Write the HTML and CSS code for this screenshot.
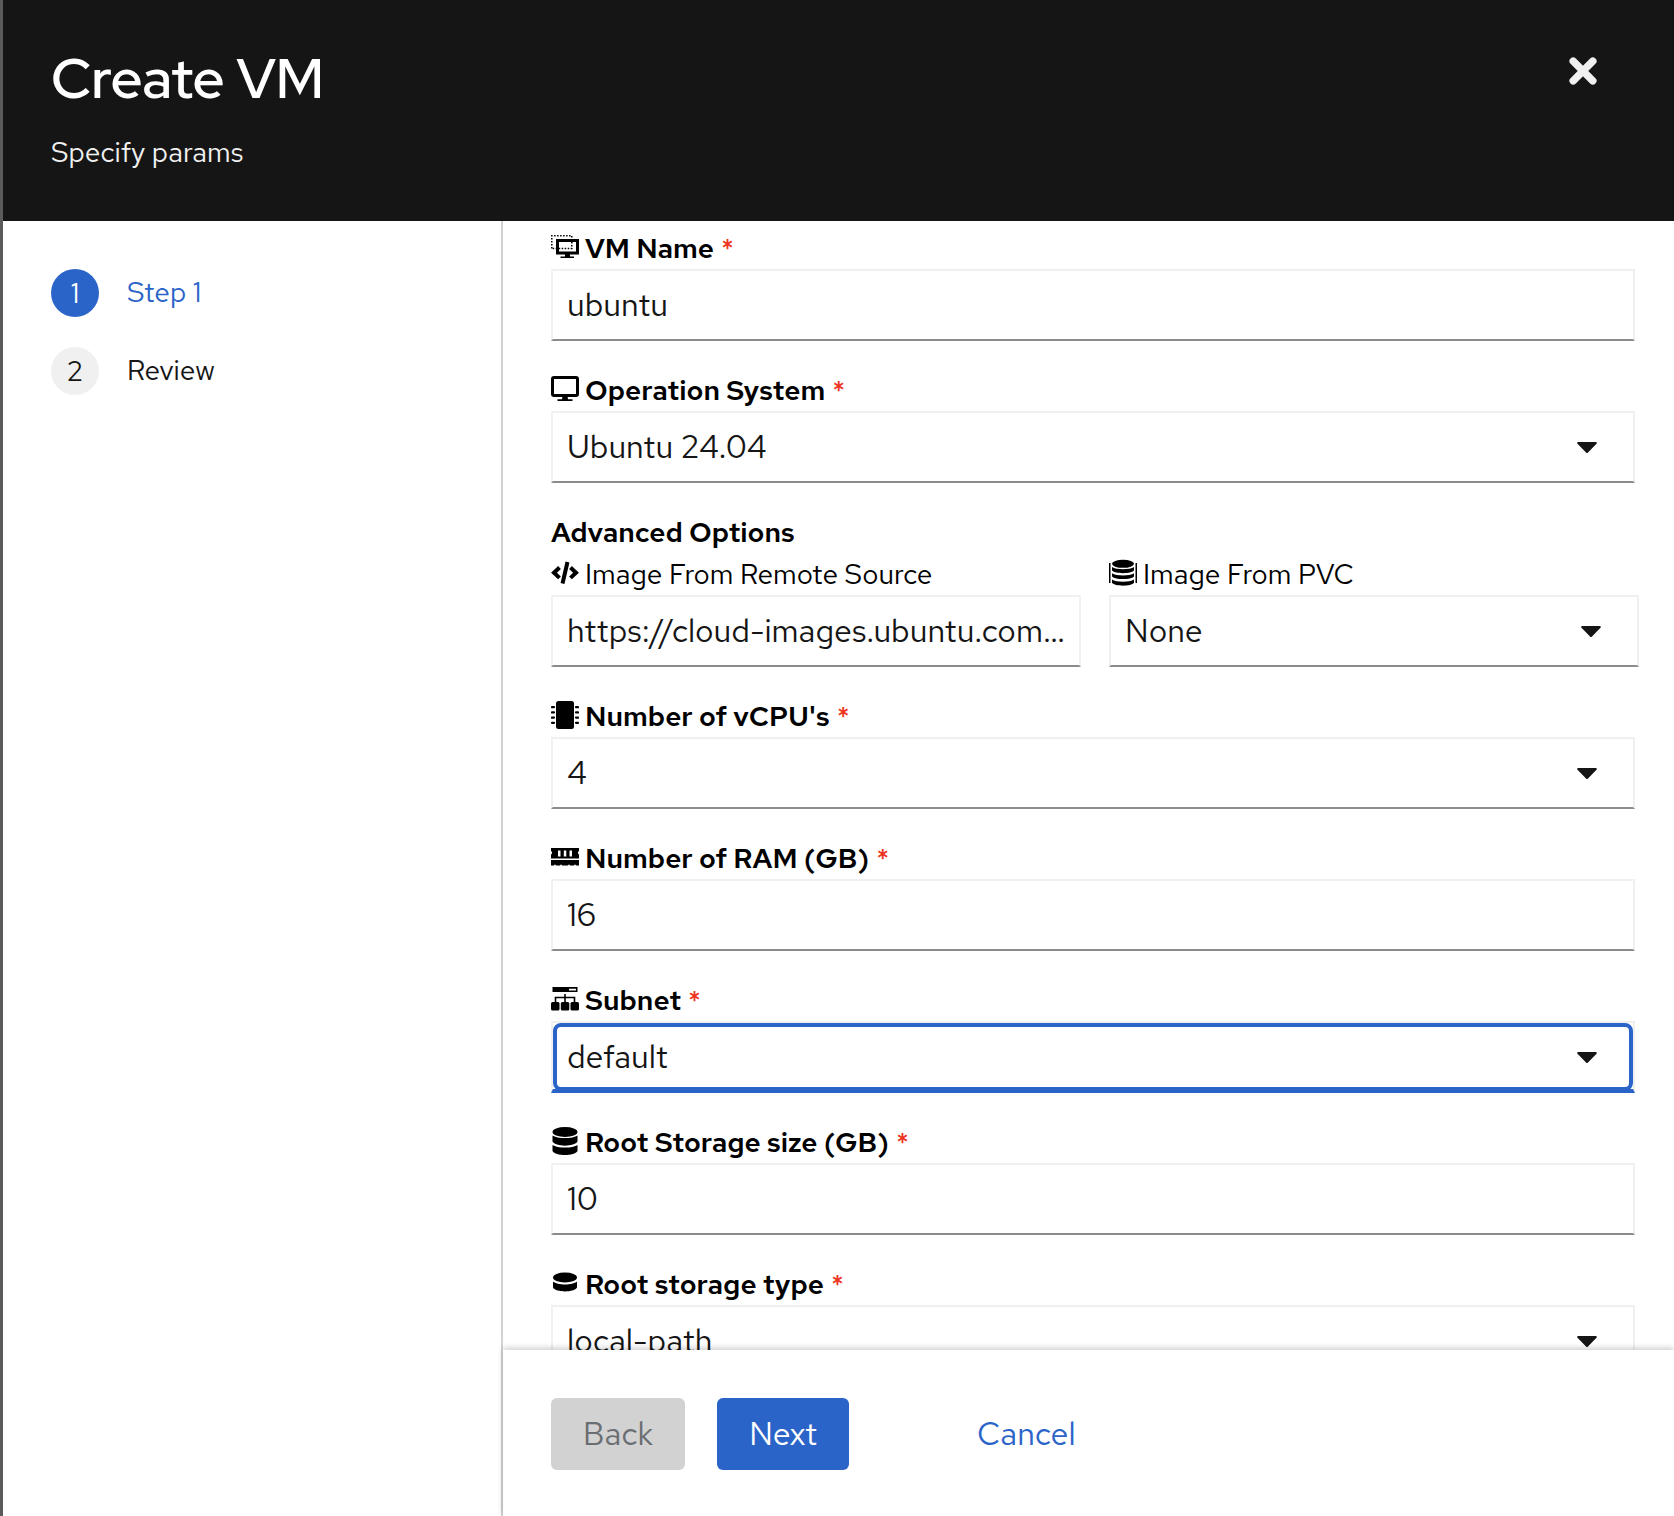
FILE: index.html
```html
<!DOCTYPE html>
<html lang="en">
<head>
<meta charset="utf-8">
<meta name="viewport" content="width=device-width, initial-scale=1">
<title>Create VM</title>
<link rel="stylesheet" href="styles.css">
</head>
<body>
<svg class="sprite" aria-hidden="true">
  <symbol id="caret" viewBox="0 0 20 11"><path d="M1.3 0h17.4c1 0 1.5 1.100.8 1.800L11 10.400a1.400 1.400 0 0 1-2 0L.5 1.800C-.2 1.100.3 0 1.300 0z"/></symbol>
</svg>
<div class="wizard">
  <header class="wizard-header">
    <div>
      <h1 class="wizard-title">Create VM</h1>
      <p class="wizard-description">Specify params</p>
    </div>
    <button class="close" type="button" aria-label="Close">
      <svg width="28" height="28" viewBox="0 0 28 28" fill="none" stroke="currentColor" stroke-width="7.500" stroke-linecap="round"><path d="M4.200 4.200l19.600 19.600M23.800 4.200L4.200 23.800"/></svg>
    </button>
  </header>

  <div class="wizard-body">
    <nav class="steps" aria-label="Steps">
      <ol class="steps-list">
        <li><button class="step step-current" type="button" aria-current="step"><span class="step-number">1</span><span class="step-name">Step 1</span></button></li>
        <li><button class="step" type="button"><span class="step-number">2</span><span class="step-name">Review</span></button></li>
      </ol>
    </nav>

    <main class="panel">
      <form class="form" id="vm-form">
        <div class="field">
          <label class="label" for="vm-name">
            <svg class="icon" viewBox="0 0 28 28"><path d="M.8 15.500V2.800h20V15.500H1" fill="none" stroke="#000" stroke-width="1.500" stroke-dasharray="1.500 1.500"/><path d="M6.500 7.500h20v12.500h-20z" fill="none" stroke="#000" stroke-width="3"/><path d="M14 21h5v2.500h4v1.500H9.500v-1.500H14z"/></svg>
            <span>VM Name</span><span class="required">*</span>
          </label>
          <input class="control" id="vm-name" type="text" value="ubuntu">
        </div>

        <div class="field">
          <label class="label" for="os">
            <svg class="icon" viewBox="0 0 28 28"><rect x="1.500" y="2.500" width="25" height="18" rx="1.500" fill="none" stroke="#000" stroke-width="3"/><path d="M11.500 21h5l.5 3.200h4.500V26h-15v-1.800H11z"/></svg>
            <span>Operation System</span><span class="required">*</span>
          </label>
          <div class="select">
            <select class="control" id="os"><option>Ubuntu 24.04</option></select>
            <svg class="caret"><use href="#caret"/></svg>
          </div>
        </div>

        <fieldset class="group">
          <legend class="label">Advanced Options</legend>
          <div class="columns">
            <div>
              <label class="label label-plain" for="remote">
                <svg class="icon" viewBox="0 0 28 28" fill="none" stroke="#000" stroke-width="4"><path d="M8.500 8.500L3 13.700l5.500 5.200M19.500 8.500l5.500 5.200-5.500 5.200M16.500 3l-5 21.500"/></svg>
                <span>Image From Remote Source</span>
              </label>
              <input class="control" id="remote" type="text" value="https://cloud-images.ubuntu.com/noble/current/noble-server-cloudimg-amd64.img">
            </div>
            <div>
              <label class="label label-plain" for="pvc">
                <svg class="icon" viewBox="0 0 28 28"><path d="M0 4h1.500v20H0zM26.500 4H28v20h-1.500z"/><ellipse cx="14" cy="4.800" rx="11" ry="4"/><path d="M3 8c4 3 18 3 22 0v3.500c-3 3.500-19 3.500-22 0zM3 14.200c4 3 18 3 22 0v3.200c-3 3.500-19 3.500-22 0zM3 20.500c4 3 18 3 22 0v3.300c-3 3.800-19 3.800-22 0z"/></svg>
                <span>Image From PVC</span>
              </label>
              <div class="select">
                <select class="control" id="pvc"><option>None</option></select>
                <svg class="caret"><use href="#caret"/></svg>
              </div>
            </div>
          </div>
        </fieldset>

        <div class="field">
          <label class="label" for="vcpu">
            <svg class="icon" viewBox="0 0 28 28"><rect x="5" y="0" width="18" height="28" rx="2.500"/><path d="M1 6.200h2M1 11.400h2M1 16.600h2M1 21.800h2M25 6.200h2M25 11.400h2M25 16.600h2M25 21.800h2" stroke="#000" stroke-width="2.200" stroke-linecap="round"/></svg>
            <span>Number of vCPU's</span><span class="required">*</span>
          </label>
          <div class="select">
            <select class="control" id="vcpu"><option>4</option></select>
            <svg class="caret"><use href="#caret"/></svg>
          </div>
        </div>

        <div class="field">
          <label class="label" for="ram">
            <svg class="icon" viewBox="0 0 28 28"><path fill-rule="evenodd" d="M0 5h28v3c-1.500.5-1.500 3 0 3.500V15.500H0v-4C1.500 11 1.500 8.500 0 8zM7 7.500v6h2.500v-6zM12.800 7.500v6h2.500v-6zM18.500 7.500v6H21v-6zM0 17h28v5.500h-3l-1-1.200-1 1.200h-4l-1-1.200-1 1.200h-6l-1-1.200-1 1.200H5l-1-1.200-1 1.200H0z"/></svg>
            <span>Number of RAM (GB)</span><span class="required">*</span>
          </label>
          <input class="control" id="ram" type="text" inputmode="numeric" value="16">
        </div>

        <div class="field">
          <label class="label" for="subnet">
            <svg class="icon" viewBox="0 0 28 28"><path fill-rule="evenodd" d="M1.500 2h25v5h-25zM18 3.700v1.800h7V3.700z"/><path d="M14 9v9M4.500 18v-5.500h19V18" fill="none" stroke="#000" stroke-width="1.600"/><rect x="0" y="17" width="8.500" height="8.500" rx="1.500"/><rect x="9.800" y="17" width="8.500" height="8.500" rx="1.500"/><rect x="19.500" y="17" width="8.500" height="8.500" rx="1.500"/></svg>
            <span>Subnet</span><span class="required">*</span>
          </label>
          <div class="select select-active">
            <select class="control" id="subnet"><option>default</option></select>
            <svg class="caret"><use href="#caret"/></svg>
          </div>
        </div>

        <div class="field">
          <label class="label" for="root-size">
            <svg class="icon" viewBox="0 0 28 28"><ellipse cx="14" cy="5" rx="12.500" ry="5"/><path d="M1.500 8.500c4.500 3.400 20.500 3.400 25 0v6c-3 5.500-22 5.500-25 0zM1.500 18c4.500 3.400 20.500 3.400 25 0v6c-3 5.300-22 5.300-25 0z"/></svg>
            <span>Root Storage size (GB)</span><span class="required">*</span>
          </label>
          <input class="control" id="root-size" type="text" inputmode="numeric" value="10">
        </div>

        <div class="field">
          <label class="label" for="root-type">
            <svg class="icon" viewBox="0 0 28 28"><ellipse cx="14" cy="8.500" rx="12" ry="5"/><path d="M2 12.500c4.500 4 19.500 4 24 0v6c-3 5.200-21 5.200-24 0z"/></svg>
            <span>Root storage type</span><span class="required">*</span>
          </label>
          <div class="select">
            <select class="control" id="root-type"><option>local-path</option></select>
            <svg class="caret"><use href="#caret"/></svg>
          </div>
        </div>
      </form>
    </main>

    <footer class="actions">
      <button class="button" type="button" disabled>Back</button>
      <button class="button button-primary" type="submit" form="vm-form">Next</button>
      <button class="button button-link" type="button">Cancel</button>
    </footer>
  </div>
</div>
</body>
</html>
```
FILE: styles.css
```css
* {
  box-sizing: border-box;
}

body {
  margin: 0;
  color: #151515;
  background: #fff;
  font-family: "Red Hat Text", Inter, sans-serif;
  font-size: 28px;
}

button,
input,
select {
  margin: 0;
  color: inherit;
  font: inherit;
}

button {
  border: 0;
  cursor: pointer;
}

.sprite {
  position: absolute;
  width: 0;
  height: 0;
}

.wizard {
  display: flex;
  flex-direction: column;
  height: 100vh;
  border-left: 3px solid #5a5a5a;
}

.wizard-header {
  display: flex;
  flex: none;
  justify-content: space-between;
  align-items: flex-start;
  padding: 42px 48px 48px;
  color: #fff;
  background: #151515;
}

.wizard-title {
  margin: 0;
  font-family: "Red Hat Display", "Red Hat Text", Inter, sans-serif;
  font-size: 56px;
  font-weight: 600;
  line-height: 72px;
}

.wizard-description {
  margin: 17px 0 0;
  color: #f0f0f0;
  line-height: 42px;
}

.close {
  display: flex;
  padding: 15px 29px;
  color: #f0f0f0;
  background: none;
}

.wizard-body {
  display: grid;
  flex: 1;
  grid-template-columns: 500px minmax(0, 1fr);
  grid-template-rows: minmax(0, 1fr) auto;
  min-height: 0;
}

.steps {
  grid-row: 1 / 3;
  padding: 48px;
  border-right: 2px solid #d2d2d2;
}

.steps-list {
  display: grid;
  gap: 30px;
  margin: 0;
  padding: 0;
  list-style: none;
}

.step {
  display: flex;
  gap: 28px;
  align-items: center;
  padding: 0;
  background: none;
}

.step-number {
  width: 48px;
  border-radius: 50%;
  background: #f0f0f0;
  line-height: 48px;
  text-align: center;
}

.step-name {
  padding-bottom: 2px;
}

.step-current {
  color: #2b64c8;
}

.step-current .step-number {
  color: #fff;
  background: #2b64c8;
}

.panel {
  overflow: hidden auto;
  padding: 6px 39px 48px 48px;
  scrollbar-width: none;
}

.form {
  display: grid;
  gap: 28px;
}

.label {
  display: flex;
  align-items: center;
  color: #000;
  font-weight: 600;
  line-height: 42px;
}

.label-plain {
  font-weight: 400;
}

.icon {
  flex: none;
  width: 28px;
  height: 28px;
  margin: 0 6px 2px 0;
}

.required {
  margin-left: 7px;
  color: #ee3322;
  font-weight: 500;
}

.group {
  min-width: 0;
  margin: 0 -4px 0 0;
  padding: 0;
  border: 0;
}

.group legend {
  padding: 0;
}

.columns {
  display: grid;
  grid-template-columns: 1fr 1fr;
  gap: 28px;
}

.control {
  display: block;
  width: 100%;
  height: 72px;
  padding: 0 14px 2px;
  border: 2px solid #f0f0f0;
  border-bottom-color: #8a8d90;
  border-radius: 0;
  outline: 0;
  color: #151515;
  background: #fff;
  font-size: 32px;
  text-overflow: ellipsis;
  appearance: none;
}

.select {
  position: relative;
}

.caret {
  position: absolute;
  top: 31px;
  right: 38px;
  width: 20px;
  height: 11px;
  fill: #151515;
  pointer-events: none;
}

.select-active .control {
  padding-bottom: 0;
  border-bottom: 4px solid #2b64c8;
}

.select-active::after {
  position: absolute;
  inset: 2px;
  border: 4px solid #2b64c8;
  border-radius: 8px;
  content: "";
  pointer-events: none;
}

.actions {
  z-index: 1;
  display: flex;
  gap: 32px;
  padding: 48px 48px 46px;
  background: #fff;
  box-shadow: 0 -2px 6px rgba(0, 0, 0, 0.2);
}

.button {
  height: 72px;
  padding: 0 32px 2px;
  border-radius: 6px;
  font-size: 32px;
}

.button:disabled {
  color: #6a6e73;
  background: #d2d2d2;
}

.button-primary {
  color: #fff;
  background: #2b64c8;
}

.button-link {
  margin-left: 64px;
  color: #2b64c8;
  background: none;
}
```
